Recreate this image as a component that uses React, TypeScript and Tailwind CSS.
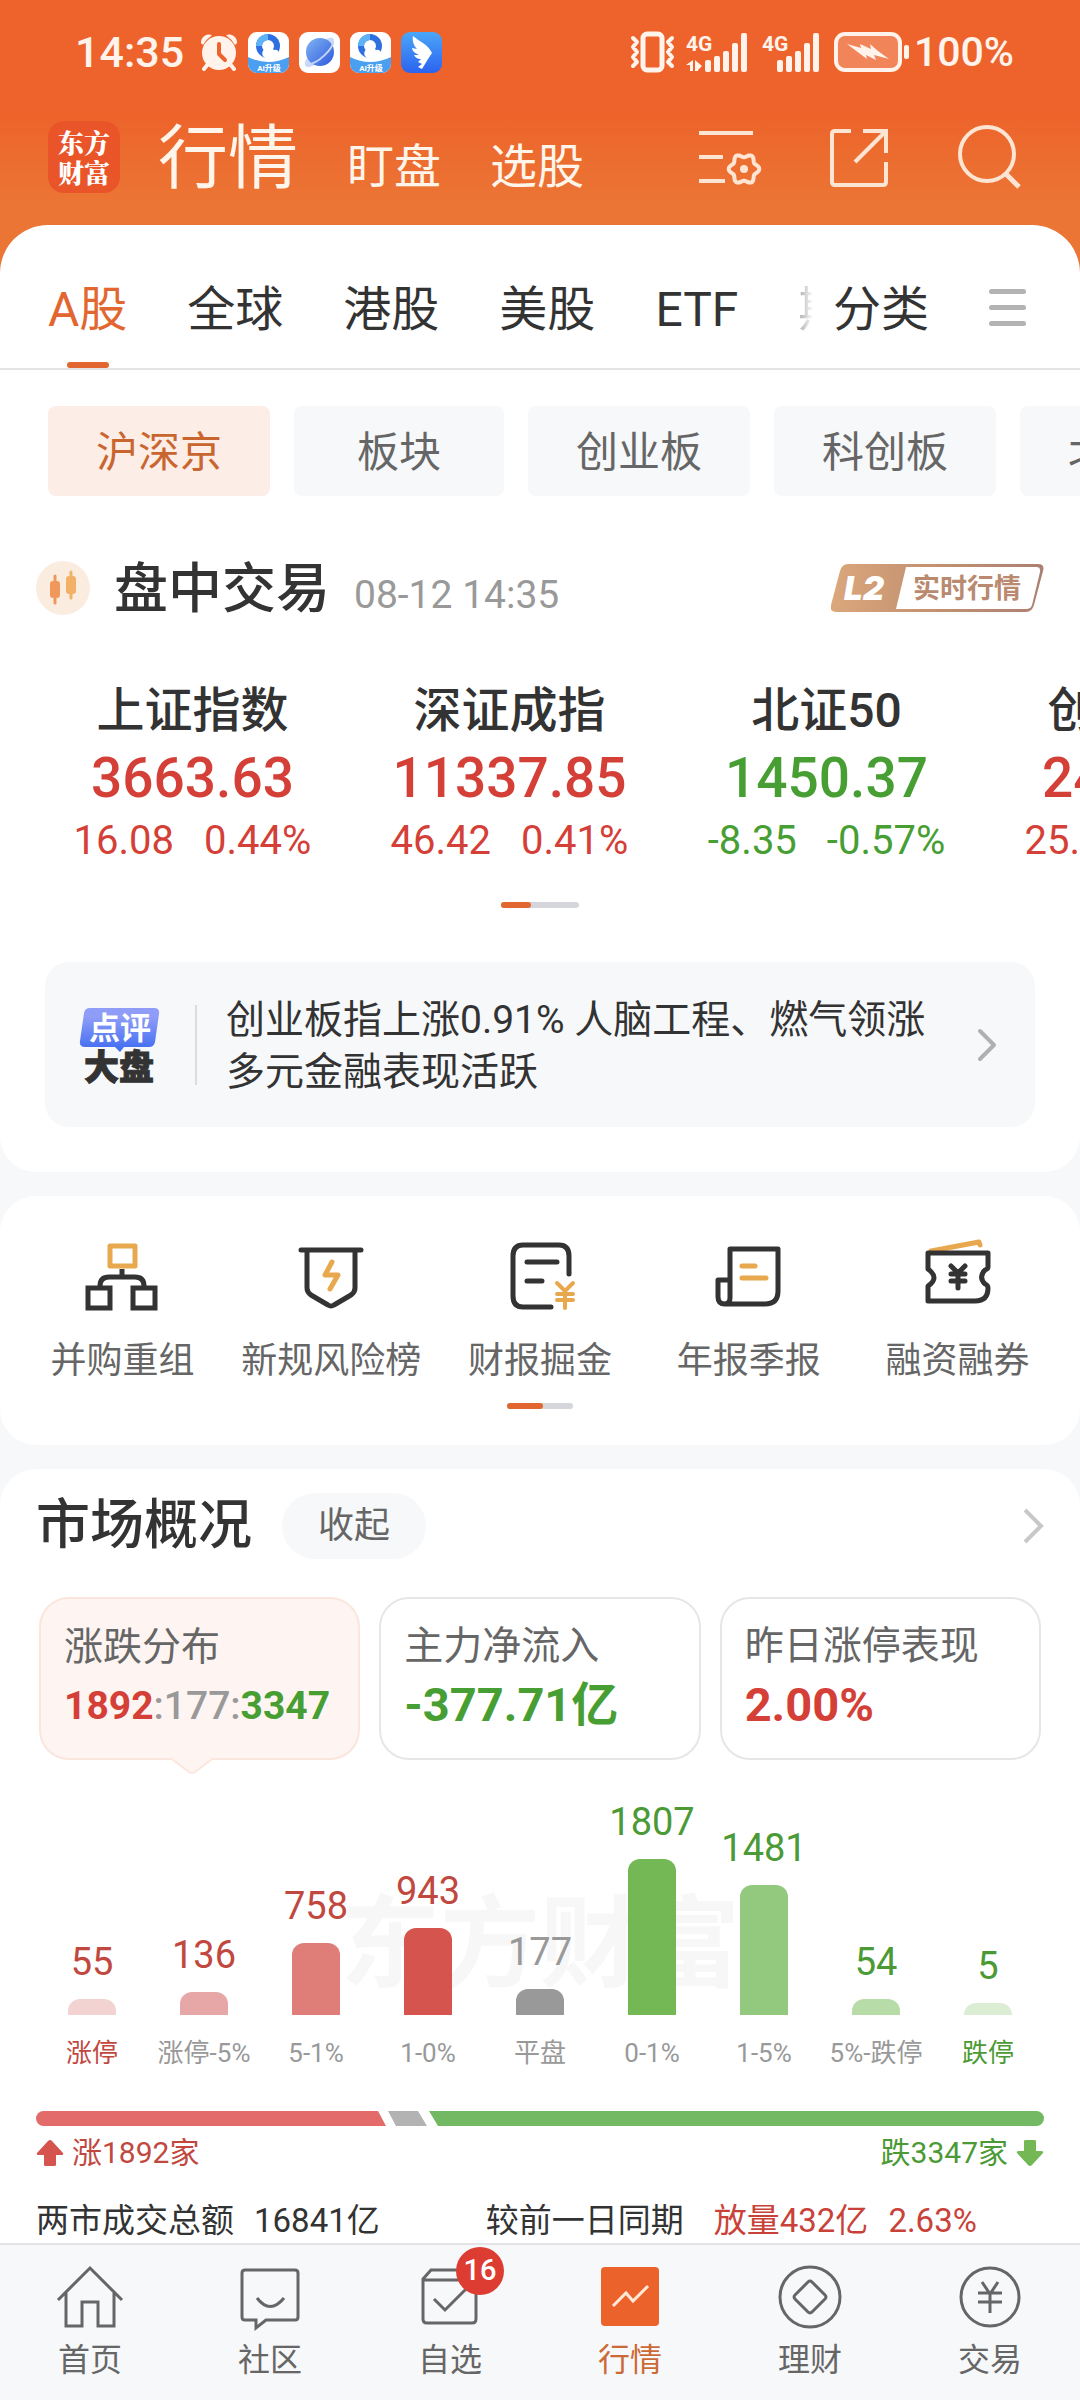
import type { ReactNode } from 'react';
import clsx from 'clsx';

const INDEXES = [
  { name: '上证指数', price: '3663.63', change: '16.08', pct: '0.44%', up: true },
  { name: '深证成指', price: '11337.85', change: '46.42', pct: '0.41%', up: true },
  { name: '北证50', price: '1450.37', change: '-8.35', pct: '-0.57%', up: false },
  { name: '创业板指', price: '2409.40', change: '25.02', pct: '1.05%', up: true },
];

const TABS = ['A股', '全球', '港股', '美股', 'ETF'];
const CHIPS = ['沪深京', '板块', '创业板', '科创板', '北交所'];

const DISTRIBUTION = [
  { label: '涨停', count: 55, height: 16, bar: 'bg-[#f2d3d2]', text: 'text-[#c1483f]', edge: true },
  { label: '涨停-5%', count: 136, height: 23, bar: 'bg-[#e8a7a7]', text: 'text-[#c1483f]' },
  { label: '5-1%', count: 758, height: 72, bar: 'bg-[#df7d79]', text: 'text-[#c1483f]' },
  { label: '1-0%', count: 943, height: 87, bar: 'bg-[#d6544e]', text: 'text-[#c1483f]' },
  { label: '平盘', count: 177, height: 26, bar: 'bg-[#999999]', text: 'text-[#999999]' },
  { label: '0-1%', count: 1807, height: 156, bar: 'bg-[#74b856]', text: 'text-[#4b9a36]' },
  { label: '1-5%', count: 1481, height: 130, bar: 'bg-[#93c97f]', text: 'text-[#4b9a36]' },
  { label: '5%-跌停', count: 54, height: 16, bar: 'bg-[#b8dca7]', text: 'text-[#4b9a36]' },
  { label: '跌停', count: 5, height: 12, bar: 'bg-[#dbedd3]', text: 'text-[#4b9a36]', edge: true },
];

// six rounded teeth, one of them pointing right
function gearPoints(cx: number, cy: number) {
  return Array.from({ length: 72 }, (_, i) => {
    const a = (i * Math.PI) / 36;
    const r = 13.5 + 1.8 * Math.cos(6 * a);
    return `${(cx + r * Math.cos(a)).toFixed(1)},${(cy + r * Math.sin(a)).toFixed(1)}`;
  }).join(' ');
}

function AlarmIcon() {
  return (
    <svg width="38" height="38" viewBox="0 0 38 38" fill="#fff3ec">
      <circle cx="19" cy="20" r="17" />
      <path d="M1 10a8 8 0 0 1 11-8l-2 2a19 19 0 0 0-7 8zM37 10a8 8 0 0 0-11-8l2 2a19 19 0 0 1 7 8z" />
      <path d="M8 31l-4 5M30 31l4 5" stroke="#fff3ec" strokeWidth="4" strokeLinecap="round" />
      <path d="M19 11v10l6 6" fill="none" stroke="#ed632b" strokeWidth="4" strokeLinecap="round" strokeLinejoin="round" />
    </svg>
  );
}

function BrowserAppIcon() {
  return (
    <svg width="41" height="41" viewBox="0 0 41 41">
      <rect width="41" height="41" rx="9" fill="#fff" />
      <path d="M0 25q20 10 41 0v7a9 9 0 0 1-9 9H9a9 9 0 0 1-9-9z" fill="#4a9ff0" />
      <circle cx="20" cy="14" r="9" fill="none" stroke="#2f6fe0" strokeWidth="6" />
      <path d="M11 14a9 9 0 0 1 9-9" fill="none" stroke="#5db3f5" strokeWidth="6" />
      <path d="M17 26a5 5 0 0 1 0-9 6 6 0 0 1 9 1 4 4 0 0 1 2 8z" fill="#fff" />
      <text x="21" y="39" textAnchor="middle" fontSize="8" fontWeight="700" fill="#fff">AI升级</text>
    </svg>
  );
}

function PlanetAppIcon() {
  return (
    <svg width="41" height="41" viewBox="0 0 41 41">
      <defs>
        <linearGradient id="planet" x1="0" y1="0" x2="1" y2="1">
          <stop offset="0" stopColor="#7fb4f2" />
          <stop offset="1" stopColor="#3059dd" />
        </linearGradient>
      </defs>
      <rect width="41" height="41" rx="9" fill="#fff" />
      <path d="M26 8c6-4 10-3 9 3S16 37 8 35c-3-1-3-5 0-9" fill="#cddaf7" />
      <circle cx="21" cy="20" r="14" fill="url(#planet)" />
      <path d="M34 10c0 6-14 22-27 23" fill="none" stroke="#c5d6f8" strokeWidth="2" />
    </svg>
  );
}

function WingAppIcon() {
  return (
    <svg width="41" height="41" viewBox="0 0 41 41">
      <defs>
        <linearGradient id="wing" x1="0" y1="0" x2="0" y2="1">
          <stop offset="0" stopColor="#4ba6f8" />
          <stop offset="1" stopColor="#2b63f0" />
        </linearGradient>
      </defs>
      <rect width="41" height="41" rx="9" fill="url(#wing)" />
      <path d="M12 4c7 6 15 8 19 17l-4 6-6 10-4-2 4-3-4-2 3-3c-4 0-6-2-7-4l5 0c-4-2-7-4-7-7l5 1c-3-3-5-8-4-13z" fill="#fff" />
    </svg>
  );
}

function VibrateIcon() {
  return (
    <svg width="46" height="42" viewBox="0 0 46 42" fill="none" stroke="#fff3ec" strokeWidth="4" strokeLinejoin="round" strokeLinecap="round">
      <rect x="13" y="3" width="19" height="36" rx="4" strokeWidth="5" />
      <path d="M3 7l4 4-4 5 4 5-4 5 4 5-4 4M42 7l-4 4 4 5-4 5 4 5-4 5 4 4" strokeWidth="4" />
    </svg>
  );
}

function SignalIcon({ data }: { data?: boolean }) {
  return (
    <svg width="62" height="41" viewBox="0 0 62 41" fill="#fff3ec">
      <text x={data ? 0 : 4} y="19" fontSize="21" fontWeight="700">4G</text>
      {data && <path d="M7 28v11H4v-6H0zM9 28l7 6-4 4v1H9z" />}
      <rect x="19" y="28" width="6" height="12" rx="2" />
      <rect x="28" y="24" width="6" height="16" rx="2" />
      <rect x="37" y="19" width="6" height="21" rx="2" />
      <rect x="46" y="11" width="6" height="29" rx="2" />
      <rect x="55" y="1" width="6" height="39" rx="2" />
    </svg>
  );
}

function BatteryIcon() {
  return (
    <svg width="76" height="40" viewBox="0 0 76 40">
      <rect x="2" y="2" width="64" height="36" rx="9" fill="#fff" fillOpacity="0.22" stroke="#fff3ec" strokeWidth="4" />
      <rect x="70" y="13" width="5" height="14" rx="2" fill="#fff3ec" />
      <path d="M13 12l14 4-1-4 11 5-1-5 8 7 11 8-15-4 2 5-10-5 1 4-8-6z" fill="#fff3ec" />
    </svg>
  );
}

function StatusBar() {
  return (
    <div className="flex h-[104px] items-center justify-between pl-[75px] pr-[66px] text-[#fff3ec]">
      <div className="flex items-center gap-[10px]">
        <span className="mr-[6px] text-[43px] font-medium leading-none">14:35</span>
        <AlarmIcon />
        <BrowserAppIcon />
        <PlanetAppIcon />
        <BrowserAppIcon />
        <WingAppIcon />
      </div>
      <div className="flex items-center gap-[10px]">
        <VibrateIcon />
        <SignalIcon data />
        <SignalIcon />
        <div className="ml-1 flex items-center gap-1">
          <BatteryIcon />
          <span className="text-[41px] font-medium leading-none">100%</span>
        </div>
      </div>
    </div>
  );
}

function HeaderBar() {
  return (
    <header className="flex h-[121px] items-start pl-12 pr-[59px] pt-[17px]">
      <div className="flex h-[72px] w-[72px] flex-col items-center justify-center rounded-2xl bg-[#ea5429] font-['Noto_Serif_CJK_SC','Noto_Sans_CJK_SC',serif] text-[26px] font-black leading-[30px] text-white">
        <span>东方</span>
        <span>财富</span>
      </div>
      <nav className="ml-[38px] flex items-baseline gap-[49px] pt-[3px] text-[#fff5ea]">
        <button className="text-[70px] leading-[70px]">行情</button>
        <button className="text-[47px] leading-[70px]">盯盘</button>
        <button className="text-[47px] leading-[70px]">选股</button>
      </nav>
      <div className="ml-auto flex gap-[66px]">
        <button aria-label="列表设置">
          <svg width="66" height="72" viewBox="0 0 66 72" fill="none" stroke="#fee5d3" strokeWidth="4">
            <path d="M2 12h54M2 36h24M2 60h26" />
            <polygon points={gearPoints(47, 48)} strokeLinejoin="round" />
            <circle cx="47" cy="48" r="4" fill="#fee5d3" stroke="none" />
          </svg>
        </button>
        <button aria-label="分享">
          <svg width="60" height="72" viewBox="0 0 60 72" fill="none" stroke="#fee5d3" strokeWidth="4">
            <path d="M22 10H6q-3 0-3 3v48q0 3 3 3h48q3 0 3-3V41" />
            <path d="M34 10h23v22M56 11L26 41" />
          </svg>
        </button>
        <button aria-label="搜索">
          <svg width="66" height="72" viewBox="0 0 66 72" fill="none" stroke="#fee5d3" strokeWidth="4">
            <circle cx="32" cy="33" r="27" />
            <path d="M50 52l14 14" strokeWidth="5" />
          </svg>
        </button>
      </div>
    </header>
  );
}

function TabBar() {
  return (
    <nav className="flex h-[145px] border-b-2 border-[#e4e4e4] pl-12 pr-[54px] text-[48px] text-[#333333]">
      <div className="flex min-w-0 flex-1 gap-[60px] overflow-hidden">
        {TABS.map((tab, i) => (
          <button
            key={tab}
            className={clsx(
              'flex h-[143px] shrink-0 flex-col items-center justify-between',
              i === 0 && 'text-[#e2662f]'
            )}
          >
            <span className="pt-[50px] leading-[70px]">{tab}</span>
            <span className={clsx('h-[6px] w-[42px] rounded-full', i === 0 && 'bg-[#e2662f]')} />
          </button>
        ))}
        <button className="-mr-4 w-[30px] shrink-0 self-start overflow-hidden bg-linear-to-r from-[#aaaaaa] to-white to-50% bg-clip-text pt-[50px] text-left leading-[70px] text-transparent">
          期
        </button>
      </div>
      <button className="self-start pt-[50px] leading-[70px]">分类</button>
      <button aria-label="更多分类" className="ml-[60px] flex w-[37px] flex-col justify-center gap-[11px] pt-[22px]">
        <span className="h-[5px] w-full rounded-full bg-[#b3b3b3]" />
        <span className="h-[5px] w-full rounded-full bg-[#b3b3b3]" />
        <span className="h-[5px] w-full rounded-full bg-[#b3b3b3]" />
      </button>
    </nav>
  );
}

function LevelBadge() {
  return (
    <svg width="213" height="48" viewBox="0 0 213 48" role="img" aria-label="L2 实时行情">
      <defs>
        <linearGradient id="level" x1="0" y1="0" x2="1" y2="0">
          <stop offset="0" stopColor="#dba77c" />
          <stop offset="0.4" stopColor="#c69472" />
          <stop offset="1" stopColor="#ab8071" />
        </linearGradient>
      </defs>
      <path d="M17 0H207q7 0 5 7l-9 34q-2 7-8 7H6q-8 0-6-7l9-34q2-7 8-7z" fill="url(#level)" />
      <path d="M75 3H205q5 0 4 5l-8 33q-1 4-6 4H65z" fill="#fff" />
      <text x="13" y="36" fontFamily="Inter" fontSize="33" fontWeight="900" fontStyle="italic" fill="#fff">L2</text>
      <text x="82" y="34" fontSize="27" fontWeight="700" fill="#b98a70">实时行情</text>
    </svg>
  );
}

function PagerDots({ wide }: { wide?: boolean }) {
  return (
    <div className={clsx('mx-auto flex h-[6px] rounded-full bg-[#d5d6db]', wide ? 'w-[78px]' : 'w-[66px]')}>
      <span className={clsx('rounded-full bg-[#e2662f]', wide ? 'w-[30px]' : 'w-9')} />
    </div>
  );
}

function CommentBanner() {
  return (
    <button className="mx-[45px] mt-[54px] flex h-[165px] items-center rounded-3xl bg-[#f7f8fa] pl-[34px] pr-[38px] text-left">
      <svg width="82" height="78" viewBox="0 0 82 78" role="img" aria-label="点评大盘">
        <defs>
          <linearGradient id="comment" x1="0" y1="0" x2="0" y2="1">
            <stop offset="0.2" stopColor="#8f9df8" />
            <stop offset="1" stopColor="#3d6bf0" />
          </linearGradient>
        </defs>
        <path d="M11 2H75q6 0 5 6l-4 28q-1 5-6 5H45l-4 5-5-5H6q-6 0-5-6l4-28q1-5 6-5z" fill="url(#comment)" />
        <text x="41" y="33" textAnchor="middle" fontSize="31" fontWeight="700" fill="#fff">点评</text>
        <text x="40" y="74" textAnchor="middle" fontSize="35" fontWeight="900" fill="#333333" stroke="#333333">大盘</text>
      </svg>
      <span className="ml-[34px] mr-[29px] h-[80px] w-[2px] shrink-0 bg-[#dddddd]" />
      <span className="flex-1 pt-[3px] text-[39px] leading-[52px] text-[#333333]">
        创业板指上涨0.91% 人脑工程、燃气领涨
        <br />
        多元金融表现活跃
      </span>
      <svg width="20" height="34" viewBox="0 0 20 34" fill="none" stroke="#b0b0b0" strokeWidth="4" strokeLinecap="round" strokeLinejoin="round">
        <path d="M3 3l14 14L3 31" />
      </svg>
    </button>
  );
}

function IndexSection() {
  return (
    <section className="flex flex-col rounded-b-[36px] bg-white pb-[45px]">
      <div className="flex gap-6 overflow-hidden pl-12 pt-9">
        {CHIPS.map((chip, i) => (
          <button
            key={chip}
            className={clsx(
              'h-[90px] min-w-[210px] shrink-0 rounded-lg px-12 pt-[2px] text-[42px]',
              i === 0 ? 'bg-[#fcede6] text-[#c9652f]' : 'bg-[#f7f8fa] text-[#666666]'
            )}
          >
            {chip}
          </button>
        ))}
      </div>

      <div className="mt-[54px] flex h-[76px] items-center px-9">
        <svg width="54" height="54" viewBox="0 0 54 54">
          <circle cx="27" cy="27" r="27" fill="#fbece0" />
          <path d="M19 15v27" stroke="#f0975c" strokeWidth="3" strokeLinecap="round" />
          <rect x="14" y="20" width="10" height="17" rx="3" fill="#f0975c" />
          <path d="M35 11v26" stroke="#f3b168" strokeWidth="3" strokeLinecap="round" />
          <rect x="30" y="15" width="10" height="18" rx="3" fill="#f3b168" />
        </svg>
        <h2 className="ml-6 pt-[3px] text-[54px] font-medium leading-[73px] text-[#333333]">盘中交易</h2>
        <time className="ml-6 pt-[14px] text-[39px] text-[#999999]">08-12 14:35</time>
        <span className="ml-auto">
          <LevelBadge />
        </span>
      </div>

      <div className="mt-[51px] flex overflow-hidden pl-[34px]">
        {INDEXES.map(item => (
          <button
            key={item.name}
            className={clsx(
              'flex w-[317px] shrink-0 flex-col items-center',
              item.up ? 'text-[#d43f37]' : 'text-[#479e33]'
            )}
          >
            <span className="text-[48px] font-medium leading-[68px] text-[#333333]">{item.name}</span>
            <span className="text-[55px] font-medium leading-[66px]">{item.price}</span>
            <span className="flex gap-[30px] text-[40px] leading-[60px]">
              <span>{item.change}</span>
              <span>{item.pct}</span>
            </span>
          </button>
        ))}
      </div>

      <div className="mt-[31px]">
        <PagerDots wide />
      </div>
      <CommentBanner />
    </section>
  );
}

function Shortcut({ label, children }: { label: string; children: ReactNode }) {
  return (
    <button className="flex flex-col items-center">
      <svg width="78" height="78" viewBox="0 0 78 78" fill="none" stroke="#333333" strokeWidth="5" strokeLinecap="round" strokeLinejoin="round">
        {children}
      </svg>
      <span className="mt-[18px] text-[36px] leading-[54px] text-[#666666]">{label}</span>
    </button>
  );
}

function ShortcutSection() {
  return (
    <section className="rounded-[36px] bg-white pb-9 pt-[42px]">
      <div className="grid grid-cols-5 px-[18px]">
        <Shortcut label="并购重组">
          <path d="M27 8h25v20H27z" stroke="#e8a84e" />
          <path d="M39 31v8M17 48q0-9 9-9h26q9 0 9 9" strokeLinecap="butt" />
          <path d="M5 50h22v20H5zM50 50h22v20H50z" strokeLinejoin="miter" />
        </Shortcut>
        <Shortcut label="新规风险榜">
          <path d="M9 12h60M15 12v38q0 4 4 7l17 10q3 2 6 0l17-10q4-3 4-7V12" />
          <path d="M40 24l-7 13h13l-8 14" stroke="#e8a84e" />
        </Shortcut>
        <Shortcut label="财报掘金">
          <path d="M68 36V18q0-11-10-11H22Q12 7 12 18v40q0 11 10 11h28M26 24h30M26 43h15" />
          <path d="M56 45l8 8 8-8M64 53v17M56 56h16M56 62h16" stroke="#e8a84e" strokeWidth="4" />
        </Shortcut>
        <Shortcut label="年报季报">
          <path d="M20 60V11h48v42q0 13-13 13H15q-7 0-7-7V42h12v18q0 6-6 6" />
          <path d="M32 28h13M32 40h24" stroke="#e8a84e" />
        </Shortcut>
        <Shortcut label="融资融券">
          <path d="M12 13l48-9 1 3" stroke="#e8a84e" />
          <path d="M9 15h60v14q0 2-3 3q-7 7 0 14q3 1 3 4q0 13-13 13H9V48q12-8 0-17z" />
          <path d="M32 28l7 7 7-7M39 35v15M32 36h14M32 43h14" />
        </Shortcut>
      </div>
      <div className="mt-[15px]">
        <PagerDots />
      </div>
    </section>
  );
}

function StatCard({ title, active, children }: { title: string; active?: boolean; children: ReactNode }) {
  return (
    <button
      className={clsx(
        'relative flex h-[163px] flex-col justify-center rounded-[30px] border-2 pl-[23px] pt-[7px] text-left',
        active ? 'border-[#fae6dc] bg-[#fef5f2]' : 'border-[#e6e6e6] bg-white'
      )}
    >
      <span className="text-[39px] leading-[56px] text-[#666666]">{title}</span>
      <span className="whitespace-nowrap leading-[62px]">{children}</span>
      {active && (
        <svg width="40" height="17" viewBox="0 0 40 17" className="absolute left-[131px] top-[158px]" fill="#fef5f2">
          <path d="M0 0L1 3 17 15q3 2 6 0L39 3V0z" />
          <path d="M1 3L17 15q3 2 6 0L39 3" fill="none" stroke="#fae6dc" strokeWidth="2" />
        </svg>
      )}
    </button>
  );
}

function DistributionChart() {
  return (
    <div className="relative mt-[25px] px-9">
      <span className="absolute inset-x-0 top-[90px] text-center text-[100px] font-bold leading-[140px] text-[#f7f7f7]">
        东方财富
      </span>
      <div className="relative grid h-[230px] grid-cols-9 items-end">
        {DISTRIBUTION.map(d => (
          <div key={d.label} className="flex flex-col items-center">
            <span className={clsx('mb-[14px] text-[38px] leading-[46px]', d.text)}>{d.count}</span>
            <span
              className={clsx('w-12 rounded-t-xl', d.bar)}
              style={{ height: d.height }}
            />
          </div>
        ))}
      </div>
      <div className="mt-[18px] grid grid-cols-9">
        {DISTRIBUTION.map(d => (
          <span
            key={d.label}
            className={clsx(
              'whitespace-nowrap text-center text-[26px] leading-[40px]',
              d.edge ? d.text : 'text-[#999999]'
            )}
          >
            {d.label}
          </span>
        ))}
      </div>
    </div>
  );
}

function RatioBar() {
  return (
    <div className="mt-[38px] px-9">
      <div className="flex h-[15px] gap-[2px] overflow-hidden rounded-full">
        <span className="w-[350px] bg-[#e36b69] [clip-path:polygon(0_0,342px_0,100%_100%,0_100%)]" />
        <span className="w-[39px] bg-[#b3b3b3] [clip-path:polygon(0_0,30px_0,100%_100%,8px_100%)]" />
        <span className="flex-1 bg-[#73b964] [clip-path:polygon(0_0,100%_0,100%_100%,9px_100%)]" />
      </div>
      <div className="mt-[6px] flex justify-between text-[30px] leading-[42px]">
        <span className="flex items-center gap-2 text-[#c1483f]">
          <svg width="28" height="28" viewBox="0 0 28 28" fill="#d6544e">
            <path d="M14 1q1 0 2 1l11 12q1 2-2 2h-5v10q0 1-2 1h-8q-2 0-2-1V16H3q-3 0-2-2L12 2q1-1 2-1z" />
          </svg>
          涨1892家
        </span>
        <span className="flex items-center gap-2 text-[#4b9a36]">
          跌3347家
          <svg width="28" height="28" viewBox="0 0 28 28" fill="#74b856">
            <path d="M14 27q1 0 2-1l11-12q1-2-2-2h-5V2q0-1-2-1h-8q-2 0-2 1v10H3q-3 0-2 2l11 12q1 1 2 1z" />
          </svg>
        </span>
      </div>
    </div>
  );
}

function MarketSection() {
  return (
    <section className="flex-1 rounded-t-[36px] bg-white pt-6">
      <div className="flex h-[66px] items-center px-9">
        <h2 className="text-[54px] font-medium leading-[66px] text-[#333333]">市场概况</h2>
        <button className="ml-[30px] h-[66px] rounded-full bg-[#f6f8fa] px-9 text-[36px] text-[#666666]">收起</button>
        <button aria-label="查看市场概况" className="ml-auto">
          <svg width="22" height="36" viewBox="0 0 22 36" fill="none" stroke="#c8c8c8" strokeWidth="4">
            <path d="M3 2l16 16L3 34" />
          </svg>
        </button>
      </div>

      <div className="mt-[38px] grid grid-cols-3 gap-[19px] px-[39px]">
        <StatCard title="涨跌分布" active>
          <span className="text-[39px] font-bold text-[#d43f37]">1892</span>
          <span className="text-[39px] font-medium text-[#999999]">:177:</span>
          <span className="text-[39px] font-bold text-[#479e33]">3347</span>
        </StatCard>
        <StatCard title="主力净流入">
          <span className="text-[47px] font-bold text-[#479e33]">-377.71亿</span>
        </StatCard>
        <StatCard title="昨日涨停表现">
          <span className="text-[47px] font-bold text-[#d43f37]">2.00%</span>
        </StatCard>
      </div>

      <DistributionChart />
      <RatioBar />

      <div className="mt-[27px] flex items-center px-9 text-[33px] leading-[40px] text-[#333333]">
        <span>两市成交总额</span>
        <span className="ml-5">16841亿</span>
        <span className="ml-[106px]">较前一日同期</span>
        <span className="ml-[30px] text-[#c94239]">放量432亿</span>
        <span className="ml-5 text-[#c94239]">2.63%</span>
      </div>
    </section>
  );
}

function NavItem({ label, active, badge, children }: { label: string; active?: boolean; badge?: number; children: ReactNode }) {
  return (
    <a href="#" className={clsx('flex flex-col items-center pt-[17px]', active ? 'text-[#cc6a36]' : 'text-[#666666]')}>
      <span className="relative">
        <svg width="70" height="70" viewBox="0 0 70 70" fill="none" stroke="currentColor" strokeWidth="3">
          {children}
        </svg>
        {badge && (
          <span className="absolute -top-[15px] left-[41px] flex h-12 w-12 items-center justify-center rounded-full bg-[#dd3c33] text-[29px] font-medium text-white">
            {badge}
          </span>
        )}
      </span>
      <span className="mt-[5px] text-[32px] leading-[46px]">{label}</span>
    </a>
  );
}

function BottomNav() {
  return (
    <nav className="sticky bottom-0 grid h-[157px] grid-cols-6 border-t-2 border-[#e3e3e5] bg-[#f7f8fa]">
      <NavItem label="首页">
        <path d="M3 38L35 6l32 32M11 31v33h16V40h16v24h16V31" />
      </NavItem>
      <NavItem label="社区">
        <path d="M10 8h50q3 0 3 3v44q0 3-3 3H31l-10 8v-8H10q-3 0-3-3V11q0-3 3-3z" />
        <path d="M22 36q13 17 27 0" />
      </NavItem>
      <NavItem label="自选" badge={16}>
        <path d="M8 17l8-9h37l8 9v40q0 4-4 4H12q-4 0-4-4zM8 18h53" />
        <path d="M19 37l11 11 22-22" />
      </NavItem>
      <NavItem label="行情" active>
        <rect x="6" y="5" width="58" height="59" rx="4" fill="#ec622b" stroke="none" />
        <path d="M18 44l13-13 7 8 15-15" stroke="#ffe9d8" />
      </NavItem>
      <NavItem label="理财">
        <circle cx="35" cy="35" r="30" />
        <path d="M37 20l13 13q2 2 0 4L37 50q-2 2-4 0L20 37q-2-2 0-4l13-13q2-2 4 0z" />
      </NavItem>
      <NavItem label="交易">
        <circle cx="35" cy="35" r="29" />
        <path d="M27 20l8 12 8-12M35 31v20M23 31h24M23 40h24" />
      </NavItem>
    </nav>
  );
}

export default function App() {
  return (
    <div className="flex min-h-screen flex-col bg-[#f6f8fa] font-['Roboto','Noto_Sans_CJK_SC',sans-serif]">
      <div className="bg-linear-to-b from-[#ed632b] from-30% to-[#eb7534] to-55%">
        <StatusBar />
        <HeaderBar />
        <div className="rounded-t-[48px] bg-white">
          <TabBar />
        </div>
      </div>
      <main className="flex flex-1 flex-col gap-6">
        <IndexSection />
        <ShortcutSection />
        <MarketSection />
      </main>
      <BottomNav />
    </div>
  );
}
